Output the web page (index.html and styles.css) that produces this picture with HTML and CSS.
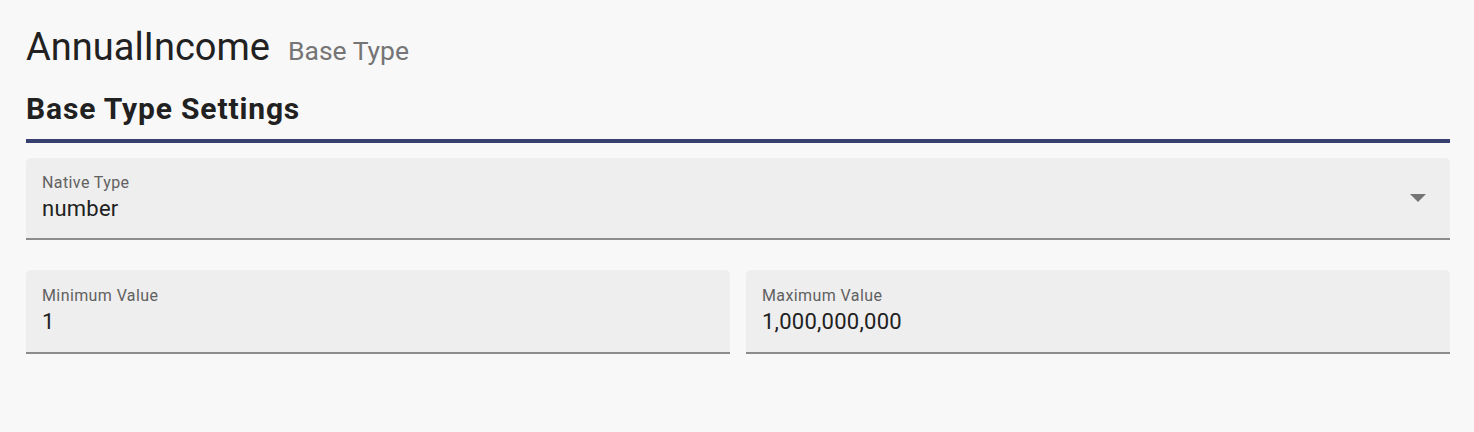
FILE: index.html
```html
<!DOCTYPE html>
<html>
<head>
<meta charset="utf-8">
<link rel="stylesheet" href="styles.css">
</head>
<body>
<div class="page">
  <header class="title-row">
    <h1 class="title">AnnualIncome</h1>
    <span class="subtitle">Base Type</span>
  </header>
  <h2 class="section">Base Type Settings</h2>
  <div class="field select">
    <div class="field-inner">
      <label class="label">Native Type</label>
      <div class="value">number</div>
    </div>
    <svg class="arrow" width="16" height="8" viewBox="0 0 16 8"><path d="M0 0 L16 0 L8 8 Z" fill="#757575"/></svg>
  </div>
  <div class="row">
    <div class="field tall">
      <div class="field-inner">
        <label class="label">Minimum Value</label>
        <div class="value">1</div>
      </div>
    </div>
    <div class="field tall">
      <div class="field-inner">
        <label class="label">Maximum Value</label>
        <div class="value">1,000,000,000</div>
      </div>
    </div>
  </div>
</div>
</body>
</html>
```
FILE: styles.css
```css
* { box-sizing: border-box; }
html, body { margin: 0; padding: 0; }
body {
  background: #f8f8f8;
  font-family: Roboto, "Liberation Sans", sans-serif;
  color: #212121;
  width: 1474px;
  height: 432px;
  overflow: hidden;
}
.page {
  padding: 24px 24px 0 26px;
}
.title-row {
  display: flex;
  align-items: baseline;
  gap: 18px;
  height: 46px;
}
.title {
  margin: 0;
  font-size: 38px;
  font-weight: 400;
  line-height: 46px;
  color: #212121;
}
.subtitle {
  font-size: 26.5px;
  color: #757575;
  font-weight: 400;
}
.section {
  margin: 21px 0 0 0;
  font-size: 30px;
  font-weight: 700;
  letter-spacing: 0.85px;
  line-height: 36px;
  padding-bottom: 12px;
  border-bottom: 4px solid #363f6e;
  color: #212121;
}
.field {
  background: #eeeeee;
  border-radius: 5px 5px 0 0;
  border-bottom: 2px solid #8c8c8c;
  height: 82px;
  display: flex;
  align-items: center;
  padding: 0 24px 0 16px;
}
.field.tall { height: 84px; }
.select { margin-top: 15px; }
.field-inner {
  flex: 1;
  display: flex;
  flex-direction: column;
}
.label {
  font-size: 16px;
  letter-spacing: 0.4px;
  color: #616161;
  line-height: 18px;
}
.value {
  font-size: 22px;
  letter-spacing: 0.25px;
  color: #212121;
  line-height: 28px;
  margin-top: 3px;
}
.arrow { display: block; }
.row {
  display: grid;
  grid-template-columns: 1fr 1fr;
  gap: 16px;
  margin-top: 30px;
}
```
